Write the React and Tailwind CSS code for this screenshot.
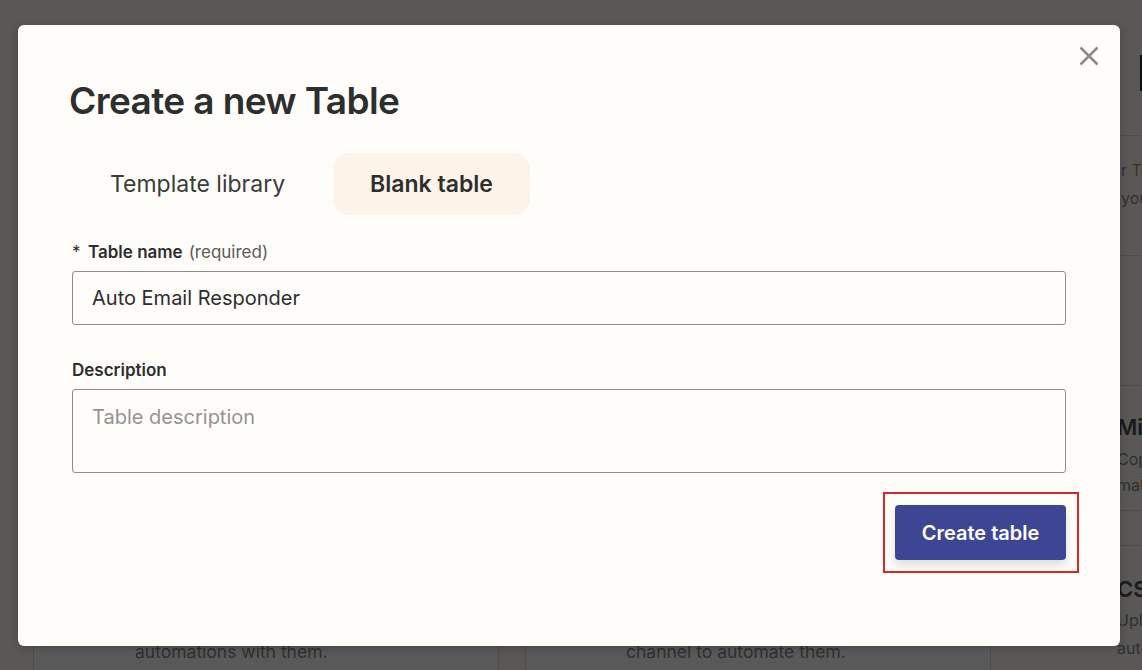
import React from "react";

function BgCard({ children, className = "" }) {
  return (
    <div className={"border border-[#dcdcdc] rounded-[4px] bg-white " + className}>
      {children}
    </div>
  );
}

export default function App() {
  return (
    <div
      className="relative w-[1142px] h-[670px] overflow-hidden bg-[#fffdf9]"
      style={{ fontFamily: "Inter, 'Noto Sans', sans-serif" }}
    >
      {/* background page */}
      <div className="flex gap-[26px] pl-[33px] pt-[40px] h-full">
        <div className="w-[466px] shrink-0 flex flex-col gap-[20px]">
          <div className="h-[60px] shrink-0" />
          <BgCard className="h-[700px] shrink-0 flex flex-col items-start pl-[101px] pt-[519px]">
            <p className="text-[17.5px] leading-[24px] text-[#8a8a8a]">automations with them.</p>
          </BgCard>
        </div>
        <div className="w-[466px] shrink-0 flex flex-col gap-[20px]">
          <div className="h-[60px] shrink-0" />
          <BgCard className="h-[700px] shrink-0 flex flex-col items-start pl-[100px] pt-[519px]">
            <p className="text-[17.5px] leading-[24px] text-[#8a8a8a]">channel to automate them.</p>
          </BgCard>
        </div>
        <div className="flex-1 min-w-0 flex flex-col">
          <div className="h-[95px] shrink-0 pt-[15px] flex justify-end">
            <div className="w-[2px] h-[36px] bg-[#2b2b2b]" />
          </div>
          <div className="border-t border-[#dcdcdc] h-[120px] shrink-0 pl-[104px] pt-[20px] text-[16px] leading-[28px] text-[#8a8a8a] whitespace-nowrap">
            <p>r <span className="text-[#b58a5a]">Tables</span></p>
            <p>your data</p>
          </div>
          <div className="border-t border-[#dcdcdc] h-[130px] shrink-0" />
          <div className="border-t border-[#dcdcdc] h-[125px] shrink-0 pl-[100px] pt-[26px] whitespace-nowrap">
            <p className="text-[22px] font-semibold text-[#4a4a4a] leading-[30px]">Microsoft</p>
            <p className="text-[16px] text-[#8a8a8a] leading-[26px] mt-[4px]">Copy</p>
            <p className="text-[16px] text-[#8a8a8a] leading-[26px]">make</p>
          </div>
          <div className="border-t border-[#dcdcdc] h-[35px] shrink-0" />
          <div className="border-t border-[#dcdcdc] pl-[100px] pt-[28px] whitespace-nowrap">
            <p className="text-[22px] font-semibold text-[#4a4a4a] leading-[30px]">CSV</p>
            <p className="text-[16px] text-[#8a8a8a] leading-[28px] mt-[2px]">Upload</p>
            <p className="text-[16px] text-[#8a8a8a] leading-[28px]">automate</p>
          </div>
        </div>
      </div>

      {/* overlay */}
      <div className="absolute inset-0 bg-[rgba(0,0,0,0.65)]" />

      {/* modal */}
      <div className="absolute left-[18px] top-[25px] w-[1102px] h-[621px] bg-[#fffdf9] rounded-[6px] shadow-[0_2px_8px_rgba(0,0,0,0.2)] px-[54px] pt-[54px]">
        <button className="absolute right-[20px] top-[20px] w-[22px] h-[22px] flex items-center justify-center text-[#8b8b8b]">
          <svg width="20" height="20" viewBox="0 0 20 20" fill="none" stroke="currentColor" strokeWidth="2.6" strokeLinecap="butt">
            <path d="M1.5 1.5 L18.5 18.5 M18.5 1.5 L1.5 18.5" />
          </svg>
        </button>

        <h1 className="-ml-[3px] text-[37px] leading-[44px] font-semibold tracking-[-0.6px] text-[#2d2e2e]">
          Create a new Table
        </h1>

        <div className="flex gap-[10px] mt-[30px]">
          <div className="h-[62px] px-[38px] flex items-center rounded-[16px] text-[23px] text-[#3b3b3b]">
            Template library
          </div>
          <div className="h-[62px] px-[37px] flex items-center rounded-[16px] bg-[#fdf3e8] text-[23px] font-semibold text-[#2d2e2e]">
            Blank table
          </div>
        </div>

        <div className="mt-[26px]">
          <label className="flex items-center h-[24px] text-[17px] text-[#2d2e2e]">
            <span className="w-[16px]">*</span>
            <span className="font-semibold">Table name</span>
            <span className="ml-[6px] text-[#5a5a5a]">(required)</span>
          </label>
          <div className="mt-[6px] h-[54px] border border-[#8e8e8e] rounded-[3px] flex items-center px-[19px] text-[20px] text-[#2d2e2e]">
            Auto Email Responder
          </div>
        </div>

        <div className="mt-[34px]">
          <label className="flex items-center h-[24px] text-[17px] font-semibold text-[#2d2e2e]">
            Description
          </label>
          <div className="mt-[6px] h-[84px] border border-[#8e8e8e] rounded-[3px] px-[19px] pt-[12px] text-[20px] text-[#939393]">
            Table description
          </div>
        </div>

        <div className="flex justify-end mt-[32px]">
          <div className="relative">
            <button className="w-[171px] h-[55px] rounded-[4px] bg-[#3e4592] text-white text-[20px] font-semibold shadow-[0_6px_10px_rgba(0,0,0,0.12)]">
              Create table
            </button>
            <div className="absolute -left-[12px] -top-[13px] -right-[13px] -bottom-[13px] border-2 border-[#d9262a]" />
          </div>
        </div>
      </div>
    </div>
  );
}
